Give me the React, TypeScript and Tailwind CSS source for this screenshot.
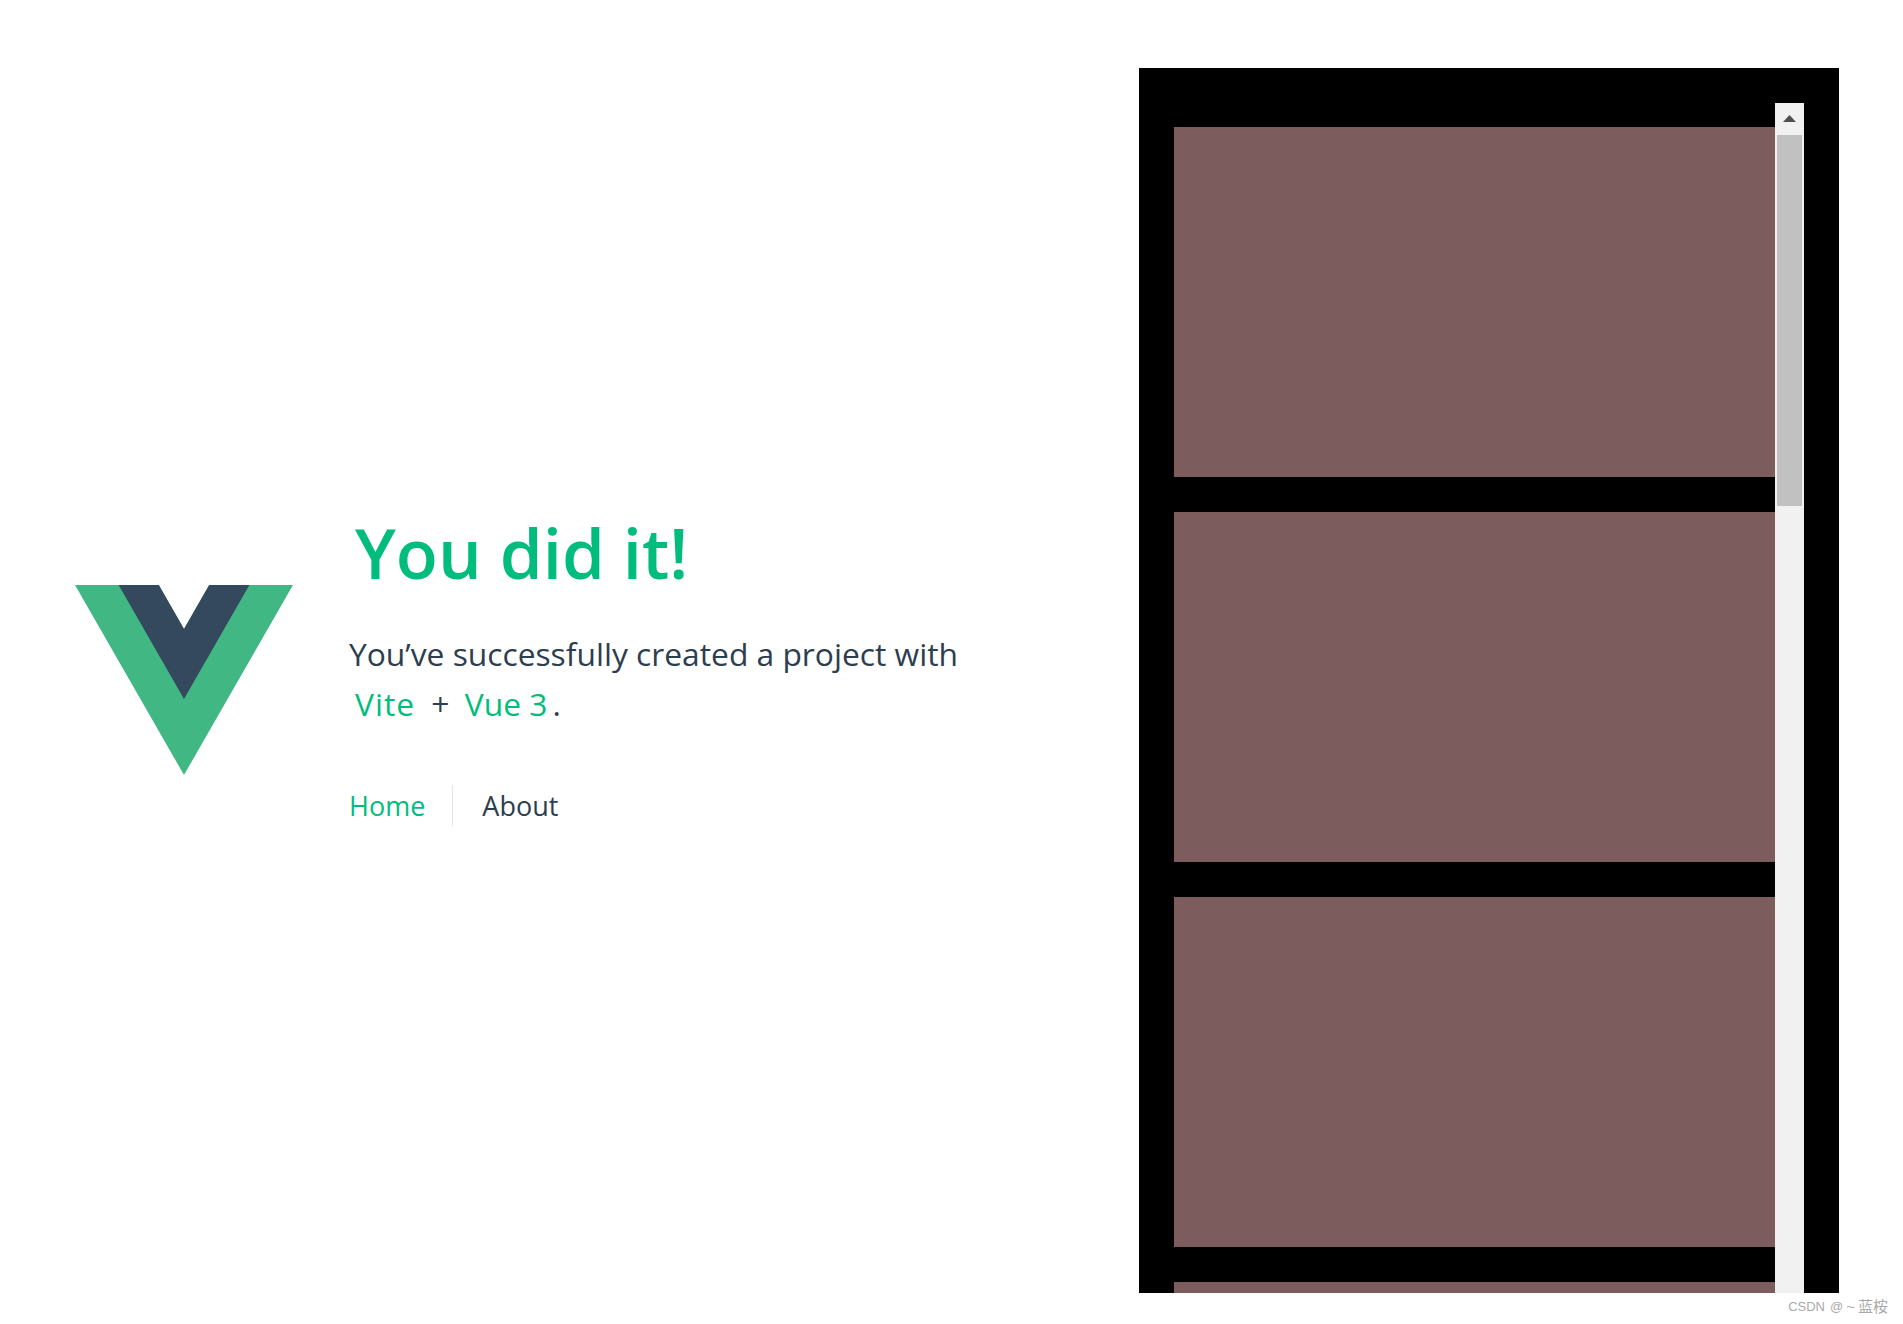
export default function App() {
  const font = { fontFamily: '"Open Sans", sans-serif' };
  return (
    <div className="relative flex h-[1324px] w-full overflow-hidden bg-white pl-[75px] pr-[64px] text-[#2c3e50]" style={font}>
      <header className="flex items-start self-start pt-[502px]">
        <svg viewBox="0 0 261.76 226.69" preserveAspectRatio="none" className="mt-[83px] h-[190px] w-[218px] shrink-0">
          <path d="M161.096.001l-30.225 52.351L100.647.001H-.005l130.876 226.688L261.749.001z" fill="#41b883" />
          <path d="M161.096.001l-30.225 52.351L100.647.001H52.346l78.525 136.01L209.398.001z" fill="#34495e" />
        </svg>
        <div className="ml-[56px]">
          <h1 className="h-[100px] pl-[6px] text-[69px] leading-[100px] font-semibold text-[#00bd7e]">You did it!</h1>
          <p className="mt-[27px] text-[31.75px] leading-[50px]">You’ve successfully created a project with</p>
          <p className="text-[31.75px] leading-[50px]">
            <a className="pr-[8px] pl-[6px] tracking-[1px] text-[#00bd7e]">Vite</a> + <a className="pr-[5px] pl-[7px] text-[#00bd7e]">Vue 3</a>.
          </p>
          <nav className="mt-[56px] flex items-center text-[27px] leading-[41px]">
            <a className="pr-[27px] text-[#00bd7e]">Home</a>
            <a className="border-l border-[#e5e5e5] pl-[29px]">About</a>
          </nav>
        </div>
      </header>
      <main className="mt-[68px] ml-auto flex h-[1225px] w-[700px] shrink-0 self-start overflow-hidden bg-black px-[35px] pt-[35px]">
        <div className="min-w-0 flex-1 overflow-hidden pt-[24px]">
          <div className="mb-[35px] h-[350px] bg-[#7c5c5c]" />
          <div className="mb-[35px] h-[350px] bg-[#7c5c5c]" />
          <div className="mb-[35px] h-[350px] bg-[#7c5c5c]" />
          <div className="mb-[35px] h-[350px] bg-[#7c5c5c]" />
        </div>
        <div className="flex w-[29px] shrink-0 flex-col items-center bg-[#f1f1f1]">
          <svg width="13" height="7" viewBox="0 0 13 7" className="mt-[12px] shrink-0">
            <path d="M6.5 0L13 7H0z" fill="#505050" />
          </svg>
          <div className="mt-[13px] h-[371px] w-[25px] bg-[#c1c1c1]" />
        </div>
      </main>
      <div className="absolute right-[15px] bottom-[8px] flex items-center text-[13px] leading-[18px] text-[#aaaaaa]" style={{ fontFamily: '"Liberation Sans", "Noto Sans CJK SC", sans-serif' }}>
        <span>CSDN</span>
        <span className="ml-[5px]">@</span>
        <span className="ml-[3px] text-[15px]">~</span>
        <span className="ml-[3px] text-[15px]">蓝桉</span>
      </div>
    </div>
  );
}
